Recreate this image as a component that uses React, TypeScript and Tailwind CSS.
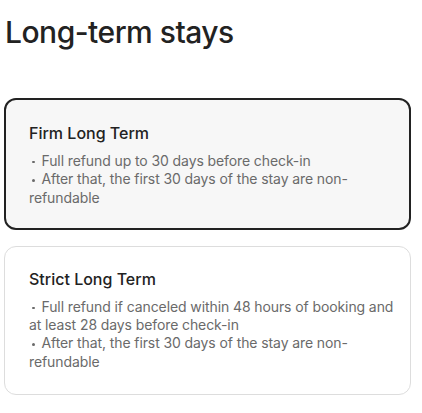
import React from "react";

type Policy = {
  title: string;
  points: string[];
  selected?: boolean;
};

const policies: Policy[] = [
  {
    title: "Firm Long Term",
    points: [
      "Full refund up to 30 days before check-in",
      "After that, the first 30 days of the stay are non-refundable",
    ],
    selected: true,
  },
  {
    title: "Strict Long Term",
    points: [
      "Full refund if canceled within 48 hours of booking and at least 28 days before check-in",
      "After that, the first 30 days of the stay are non-refundable",
    ],
  },
];

const PolicyCard = ({ policy }: { policy: Policy }) => {
  return (
    <div
      className={
        policy.selected
          ? "rounded-xl border-2 border-[#222222] bg-[#f7f7f7] pl-[23px] pr-[7px] pt-[23px] pb-[21px]"
          : "rounded-xl border border-[#dddddd] bg-white pl-6 pr-2 pt-[22px] pb-[23px]"
      }
    >
      <div className="text-[16px] leading-5 font-medium text-[#222222]">
        {policy.title}
      </div>
      <div className="mt-[9px] text-[14px] leading-[18.3px] tracking-[-0.1px] text-[#6a6a6a]">
        {policy.points.map((p) => (
          <p key={p}>
            {/* bullet dot */}
            <span className="ml-[3px] mr-[7px] inline-block h-[2.5px] w-[2.5px] rounded-full bg-[#6a6a6a] align-middle" />
            {p}
          </p>
        ))}
      </div>
    </div>
  );
};

export default function App() {
  return (
    <div
      className="w-[422px] h-[413px] bg-white pl-1 pr-[11px] pt-[14px]"
      style={{ fontFamily: "Inter, 'Noto Sans', sans-serif" }}
    >
      <h1 className="pl-px text-[30px] leading-9 font-medium tracking-[-0.5px] text-[#222222]">
        Long-term stays
      </h1>
      <div className="mt-12 flex flex-col gap-4">
        {policies.map((p) => (
          <PolicyCard key={p.title} policy={p} />
        ))}
      </div>
    </div>
  );
}
